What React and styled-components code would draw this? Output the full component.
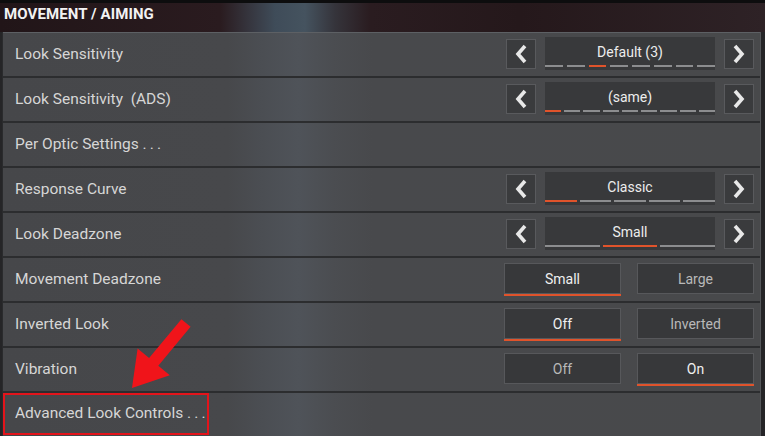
import React from "react";
import styled, { createGlobalStyle } from "styled-components";

const Global = createGlobalStyle`
  html, body { margin: 0; padding: 0; background: #1c1c1e; overflow: hidden; }
  * { box-sizing: border-box; }
`;

const Screen = styled.div`
  position: relative;
  width: 765px;
  height: 436px;
  overflow: hidden;
  background: #252527;
  font-family: Roboto, "Liberation Sans", sans-serif;
  display: flex;
  flex-direction: column;
`;

const Header = styled.div`
  height: 32px;
  flex: 0 0 32px;
  border-top: 3px solid #0d0d0e;
  display: flex;
  align-items: flex-start;
  padding: 2px 0 0 4px;
  background: linear-gradient(
    90deg,
    #211518 0,
    #2a1b1f 220px,
    #36363f 250px,
    #3f4c59 275px,
    #45535f 305px,
    #35343b 335px,
    #2a1c20 370px,
    #25181b 520px,
    #2e2226 100%
  );
`;

const Title = styled.h1`
  margin: 0;
  font-size: 15px;
  line-height: 18px;
  font-weight: 700;
  color: #f2f2f2;
  letter-spacing: 0.1px;
`;

const Panel = styled.div`
  flex: 1;
  min-height: 0;
  margin: 0 5px 0 3px;
  border-top: 1px solid #5d6064;
  display: flex;
  flex-direction: column;
  background: linear-gradient(
    90deg,
    #46474a 0,
    #47484b 225px,
    #4b4e53 260px,
    #4f5359 295px,
    #4b4d51 330px,
    #48494c 370px,
    #48494b 100%
  );
  box-shadow: -1px 0 0 #2a2b2d, 1px 0 0 #55575a;
`;

const Row = styled.div`
  height: 45px;
  flex: 0 0 45px;
  display: flex;
  align-items: center;
  justify-content: space-between;
  padding: 0 6px 2px ${(p) => (p.$flush ? "0" : "12px")};
  border-bottom: ${(p) => (p.$last ? "0" : "2px solid #2c2d2f")};
`;

const Label = styled.span`
  font-size: 15.5px;
  color: #d6d6d6;
  white-space: nowrap;
`;

const Highlight = styled.div`
  align-self: flex-start;
  height: 42px;
  width: 206px;
  display: flex;
  align-items: center;
  padding: 0 0 2px 10px;
  border: 2px solid #e3141b;
`;

const Stepper = styled.div`
  display: flex;
  align-items: center;
  gap: 9px;
`;

const ArrowButton = styled.div`
  width: 30px;
  height: 30px;
  display: flex;
  align-items: center;
  justify-content: center;
  background: #3a3b3d;
  border: 1px solid #595a5d;
`;

const ValueBox = styled.div`
  width: 170px;
  height: 33px;
  background: #38393b;
  display: flex;
  flex-direction: column;
  align-items: stretch;
  justify-content: flex-end;
  padding-bottom: 3px;
`;

const ValueText = styled.div`
  flex: 1;
  display: flex;
  align-items: center;
  justify-content: center;
  font-size: 14px;
  color: #ededed;
  padding-top: 2px;
`;

const Segments = styled.div`
  display: flex;
  gap: ${(p) => p.$gap}px;
  height: 2px;
`;

const Segment = styled.div`
  flex: 1;
  background: ${(p) => (p.$active ? "#e0532b" : "#8c8d8f")};
`;

const Toggles = styled.div`
  display: flex;
  gap: 16px;
`;

const ToggleButton = styled.div`
  width: 117px;
  height: 31px;
  display: flex;
  align-items: center;
  justify-content: center;
  background: #37383a;
  border: 1px solid #57585b;
  font-size: 14px;
  color: ${(p) => (p.$active ? "#f0f0f0" : "#b9b9b9")};
  box-shadow: ${(p) => (p.$active ? "0 2px 0 #e0532b" : "none")};
`;

const Annotation = styled.svg`
  position: absolute;
  left: 0;
  top: 0;
  pointer-events: none;
`;

const Chevron = ({ dir }) => (
  <svg width="12" height="20" viewBox="0 0 12 20">
    <polyline
      points={dir === "left" ? "10,2 3,10 10,18" : "2,2 9,10 2,18"}
      fill="none"
      stroke="#e8e8e8"
      strokeWidth="3.6"
      strokeLinejoin="miter"
    />
  </svg>
);

const StepperControl = ({ value, count, active, gap = 3 }) => (
  <Stepper>
    <ArrowButton>
      <Chevron dir="left" />
    </ArrowButton>
    <ValueBox>
      <ValueText>{value}</ValueText>
      <Segments $gap={gap}>
        {Array.from({ length: count }).map((_, i) => (
          <Segment key={i} $active={i === active} />
        ))}
      </Segments>
    </ValueBox>
    <ArrowButton>
      <Chevron dir="right" />
    </ArrowButton>
  </Stepper>
);

const ToggleControl = ({ options, active }) => (
  <Toggles>
    {options.map((o, i) => (
      <ToggleButton key={o} $active={i === active}>
        {o}
      </ToggleButton>
    ))}
  </Toggles>
);

const DOTS = ".\u2009.\u2009.";

export default function App() {
  return (
    <>
      <Global />
      <Screen>
        <Header>
          <Title>MOVEMENT / AIMING</Title>
        </Header>
        <Panel>
          <Row>
            <Label>Look Sensitivity</Label>
            <StepperControl value="Default (3)" count={8} active={2} gap={4} />
          </Row>
          <Row>
            <Label>Look Sensitivity&nbsp; (ADS)</Label>
            <StepperControl value="(same)" count={9} active={0} gap={3} />
          </Row>
          <Row>
            <Label>Per Optic Settings {DOTS}</Label>
          </Row>
          <Row>
            <Label>Response Curve</Label>
            <StepperControl value="Classic" count={5} active={0} gap={3} />
          </Row>
          <Row>
            <Label>Look Deadzone</Label>
            <StepperControl value="Small" count={3} active={1} gap={3} />
          </Row>
          <Row>
            <Label>Movement Deadzone</Label>
            <ToggleControl options={["Small", "Large"]} active={0} />
          </Row>
          <Row>
            <Label>Inverted Look</Label>
            <ToggleControl options={["Off", "Inverted"]} active={0} />
          </Row>
          <Row>
            <Label>Vibration</Label>
            <ToggleControl options={["Off", "On"]} active={1} />
          </Row>
          <Row $flush $last>
            <Highlight>
              <Label>Advanced Look Controls {DOTS}</Label>
            </Highlight>
          </Row>
        </Panel>
        <Annotation width="765" height="436" viewBox="0 0 765 436">
          <polygon
            points="181.4,319.2 149.1,358.1 137.6,348.5 132,388 169.8,375.3 158.3,365.7 190.6,326.8"
            fill="#f0141a"
          />
        </Annotation>
      </Screen>
    </>
  );
}
